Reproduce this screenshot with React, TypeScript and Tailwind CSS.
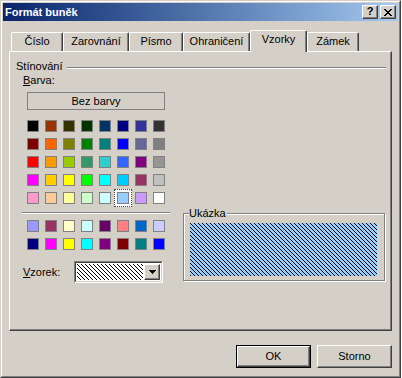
import React from "react";

const palette = [
  ["#000000", "#993300", "#333300", "#003300", "#003366", "#000080", "#333399", "#333333"],
  ["#800000", "#FF6600", "#808000", "#008000", "#008080", "#0000FF", "#666699", "#808080"],
  ["#FF0000", "#FF9900", "#99CC00", "#339966", "#33CCCC", "#3366FF", "#800080", "#969696"],
  ["#FF00FF", "#FFCC00", "#FFFF00", "#00FF00", "#00FFFF", "#00CCFF", "#993366", "#C0C0C0"],
  ["#FF99CC", "#FFCC99", "#FFFF99", "#CCFFCC", "#CCFFFF", "#99CCFF", "#CC99FF", "#FFFFFF"],
];

const extra = [
  ["#9999FF", "#993366", "#FFFFCC", "#CCFFFF", "#660066", "#FF8080", "#0066CC", "#CCCCFF"],
  ["#000080", "#FF00FF", "#FFFF00", "#00FFFF", "#800080", "#800000", "#008080", "#0000FF"],
];

const tabs = [
  { label: "Číslo", w: "w-[52px]" },
  { label: "Zarovnání", w: "w-[66px]" },
  { label: "Písmo", w: "w-[54px]" },
  { label: "Ohraničení", w: "w-[67px]" },
  { label: "Vzorky", w: "w-[57px]", active: true },
  { label: "Zámek", w: "w-[52px]" },
];

// thin reverse diagonal stripe, 1px line every 4px
function Hatch({ id, bg }: { id: string; bg: string }) {
  return (
    <svg width="100%" height="100%" shapeRendering="crispEdges" className="block">
      <defs>
        <pattern id={id} width="4" height="4" patternUnits="userSpaceOnUse">
          <rect width="4" height="4" fill={bg} />
          <rect x="0" y="0" width="1" height="1" fill="#000" />
          <rect x="1" y="1" width="1" height="1" fill="#000" />
          <rect x="2" y="2" width="1" height="1" fill="#000" />
          <rect x="3" y="3" width="1" height="1" fill="#000" />
        </pattern>
      </defs>
      <rect width="100%" height="100%" fill={`url(#${id})`} />
    </svg>
  );
}

function Swatch({ color, selected }: { color: string; selected?: boolean }) {
  return (
    <div
      className={`w-[18px] h-[18px] flex items-center justify-center ${
        selected ? "border border-dotted border-[#404040] bg-white" : ""
      }`}
    >
      <div className="w-[12px] h-[12px] border border-[#808080]" style={{ backgroundColor: color }} />
    </div>
  );
}

function CaptionButton({ children }: { children: React.ReactNode }) {
  return (
    <div className="w-[16px] h-[14px] bg-[#D4D0C8] border border-t-white border-l-white border-r-[#404040] border-b-[#404040] shadow-[inset_-1px_-1px_0_#808080] flex items-center justify-center">
      {children}
    </div>
  );
}

export default function App() {
  return (
    <div className="w-[402px] h-[378px] bg-white font-['Liberation_Sans',Arial,sans-serif] text-[11px] leading-[13px] text-black">
      <div className="w-[401px] h-[378px] bg-[#D4D0C8] border border-t-[#D4D0C8] border-l-[#D4D0C8] border-r-[#404040] border-b-[#404040]">
        <div className="h-full p-px border border-t-white border-l-white border-r-[#808080] border-b-[#808080] flex flex-col">
          {/* title bar */}
          <div className="h-[18px] bg-linear-to-r from-[#0A246A] to-[#A6CAF0] flex items-center pl-[2px] pr-[2px]">
            <span className="font-bold text-white leading-[18px] flex-1">Formát buněk</span>
            <div className="flex gap-[2px]">
              <CaptionButton>
                <span className="font-bold text-[11px] leading-[11px] -mt-px">?</span>
              </CaptionButton>
              <CaptionButton>
                <svg width="8" height="7" viewBox="0 0 8 7" shapeRendering="crispEdges">
                  <path d="M0 0h2v1h-2zM6 0h2v1h-2zM1 1h2v1h-2zM5 1h2v1h-2zM2 2h4v1h-4zM3 3h2v1h-2zM2 4h4v1h-4zM1 5h2v1h-2zM5 5h2v1h-2zM0 6h2v1h-2zM6 6h2v1h-2z" fill="#000" />
                </svg>
              </CaptionButton>
            </div>
          </div>

          <div className="flex flex-col px-[6px] pt-[9px]">
            {/* tabs */}
            <div className="flex items-end h-[21px] pl-[2px]">
              {tabs.map((t) =>
                t.active ? (
                  <div
                    key={t.label}
                    className={`${t.w} h-[22px] -mb-px relative z-10 bg-[#D4D0C8] rounded-t-[2px] border-l border-t border-r border-l-white border-t-white border-r-[#404040] shadow-[inset_-1px_0_0_#808080] flex justify-center pt-[2px]`}
                  >
                    {t.label}
                  </div>
                ) : (
                  <div
                    key={t.label}
                    className={`${t.w} h-[19px] rounded-t-[2px] border-l border-t border-r border-l-white border-t-white border-r-[#404040] shadow-[inset_-1px_0_0_#808080] flex justify-center pt-[2px]`}
                  >
                    {t.label}
                  </div>
                )
              )}
            </div>

            {/* panel */}
            <div className="w-[383px] h-[280px] border border-l-white border-t-white border-r-[#404040] border-b-[#404040] shadow-[inset_-1px_-1px_0_#808080] flex flex-col">
              <div className="flex items-start mt-[8px] pl-[6px] pr-[5px]">
                <span>Stínování</span>
                <div className="flex-1 ml-[5px] mt-[7px] h-[2px] border-t border-t-[#808080] border-b border-b-white" />
              </div>
              <div className="pl-[13px] mt-px">
                <span className="underline">B</span>arva:
              </div>
              <div className="ml-[17px] mt-[5px] w-[138px] h-[18px] border border-[#808080] flex items-center justify-center">
                Bez barvy
              </div>
              <div className="ml-[14px] mt-[7px] grid grid-cols-8 w-[144px]">
                {palette.map((row, r) =>
                  row.map((c, i) => <Swatch key={`${r}-${i}`} color={c} selected={r === 4 && i === 5} />)
                )}
              </div>

              <div className="flex items-start">
                <div className="ml-[12px] w-[148px] flex flex-col">
                  <div className="mt-[5px] h-[2px] border-t border-t-[#808080] border-b border-b-white" />
                  <div className="mt-[3px] pl-[2px] grid grid-cols-8 w-[146px]">
                    {extra.map((row, r) => row.map((c, i) => <Swatch key={`e${r}-${i}`} color={c} />))}
                  </div>
                  <div className="mt-[8px] pl-px flex items-center">
                    <span className="w-[51px]">
                      <span className="underline">V</span>zorek:
                    </span>
                    <div className="w-[89px] h-[22px] border border-t-[#808080] border-l-[#808080] border-r-white border-b-white">
                      <div className="h-full border border-t-[#404040] border-l-[#404040] border-r-[#D4D0C8] border-b-[#D4D0C8] bg-white flex p-px">
                        <div className="flex-1 h-full">
                          <Hatch id="combo" bg="#FFFFFF" />
                        </div>
                        <div className="w-[16px] h-full ml-px bg-[#D4D0C8] border border-t-white border-l-white border-r-[#404040] border-b-[#404040] shadow-[inset_-1px_-1px_0_#808080] flex items-center justify-center">
                          <svg width="7" height="4" viewBox="0 0 7 4" shapeRendering="crispEdges">
                            <path d="M0 0h7v1h-7zM1 1h5v1h-5zM2 2h3v1h-3zM3 3h1v1h-1z" fill="#000" />
                          </svg>
                        </div>
                      </div>
                    </div>
                  </div>
                </div>

                <div className="ml-[13px] mt-[6px] w-[202px] h-[68px] relative border border-[#808080] shadow-[inset_1px_1px_0_#fff,1px_1px_0_#fff] pl-[6px] pr-[7px] pt-[9px] pb-[4px]">
                  <span className="absolute left-[5px] -top-[7px] bg-[#D4D0C8] pr-px">Ukázka</span>
                  <div className="w-full h-full">
                    <Hatch id="preview" bg="#99CCFF" />
                  </div>
                </div>
              </div>
            </div>

            {/* buttons */}
            <div className="flex justify-end gap-[6px] mt-[14px]">
              <div className="w-[75px] h-[23px] border border-black">
                <div className="h-full border border-t-white border-l-white border-r-[#404040] border-b-[#404040] shadow-[inset_-1px_-1px_0_#808080] flex items-center justify-center">
                  OK
                </div>
              </div>
              <div className="w-[75px] h-[23px] border border-t-white border-l-white border-r-[#404040] border-b-[#404040] shadow-[inset_-1px_-1px_0_#808080] flex items-center justify-center">
                Storno
              </div>
            </div>
          </div>
        </div>
      </div>
    </div>
  );
}
